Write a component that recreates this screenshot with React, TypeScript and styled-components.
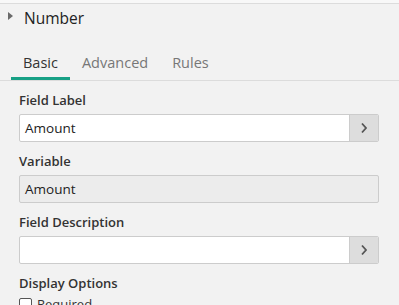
import React from "react";
import styled, { createGlobalStyle } from "styled-components";

const Global = createGlobalStyle`
  html, body { margin: 0; padding: 0; background: #f2f2f2; }
  body { font-family: "Open Sans", "Noto Sans", sans-serif; color: #333; }
  * { box-sizing: border-box; }
`;

const Page = styled.div`
  width: 399px;
  height: 305px;
  overflow: hidden;
  background: #f2f2f2;
  padding-top: 3px;
  background-image: linear-gradient(#f8f8f8, #f8f8f8);
  background-size: 100% 3px;
  background-repeat: no-repeat;
`;

const Panel = styled.div`
  border-top: 1px solid #dcdcdc;
  background: #f2f2f2;
`;

const Header = styled.div`
  display: flex;
  align-items: flex-start;
  gap: 11px;
  padding: 3px 0 0 8px;
  height: 25px;
`;

const Caret = styled.span`
  width: 0;
  height: 0;
  border-top: 4.5px solid transparent;
  border-bottom: 4.5px solid transparent;
  border-left: 5px solid #6a6a6a;
  margin-top: 5px;
`;

const Title = styled.span`
  font-size: 15.5px;
  line-height: 22px;
  color: #222;
`;

const TabList = styled.div`
  display: flex;
  margin-top: 23px;
  padding-left: 11px;
  border-bottom: 1px solid #dcdcdc;
`;

const Tab = styled.div<{ $active?: boolean }>`
  font-size: 14.5px;
  line-height: 20px;
  padding: 1px 12px 4px;
  color: ${(p) => (p.$active ? "#333" : "#777")};
  border-bottom: 3px solid ${(p) => (p.$active ? "#17a085" : "transparent")};
`;

const Body = styled.div`
  padding: 10px 20px 0 19px;
  display: flex;
  flex-direction: column;
`;

const Group = styled.div`
  display: flex;
  flex-direction: column;
  gap: 5px;
  margin-bottom: 10px;
`;

const Label = styled.div`
  font-size: 13px;
  line-height: 18px;
  font-weight: 600;
  color: #333;
`;

const InputRow = styled.div<{ $disabled?: boolean }>`
  display: flex;
  height: 28px;
  border: 1px solid #cccccc;
  border-radius: 2px;
  background: ${(p) => (p.$disabled ? "#ececec" : "#fff")};
  overflow: hidden;
`;

const Value = styled.div`
  flex: 1;
  padding-left: 5px;
  font-size: 13.5px;
  line-height: 26px;
  color: #222;
`;

const ChevButton = styled.div`
  width: 29px;
  background: #dddddd;
  border-left: 1px solid #cccccc;
  display: flex;
  align-items: center;
  justify-content: center;
`;

const CheckRow = styled.div`
  display: flex;
  align-items: center;
  gap: 5px;
  margin-top: 3px;
`;

const Box = styled.span`
  width: 13px;
  height: 13px;
  border: 1px solid #555;
  border-radius: 2px;
  background: #fff;
`;

const CheckText = styled.span`
  font-size: 13px;
  line-height: 18px;
  color: #333;
`;

const Chevron = () => (
  <svg width="8" height="12" viewBox="0 0 8 12">
    <path d="M2 1.5 L6 6 L2 10.5" fill="none" stroke="#555" strokeWidth="1.8" />
  </svg>
);

export default function App() {
  return (
    <Page>
      <Global />
      <Panel>
        <Header>
          <Caret />
          <Title>Number</Title>
        </Header>
        <TabList>
          <Tab $active>Basic</Tab>
          <Tab>Advanced</Tab>
          <Tab>Rules</Tab>
        </TabList>
        <Body>
          <Group>
            <Label>Field Label</Label>
            <InputRow>
              <Value>Amount</Value>
              <ChevButton>
                <Chevron />
              </ChevButton>
            </InputRow>
          </Group>
          <Group>
            <Label>Variable</Label>
            <InputRow $disabled>
              <Value>Amount</Value>
            </InputRow>
          </Group>
          <Group>
            <Label>Field Description</Label>
            <InputRow>
              <Value />
              <ChevButton>
                <Chevron />
              </ChevButton>
            </InputRow>
          </Group>
          <Label>Display Options</Label>
          <CheckRow>
            <Box />
            <CheckText>Required</CheckText>
          </CheckRow>
        </Body>
      </Panel>
    </Page>
  );
}
